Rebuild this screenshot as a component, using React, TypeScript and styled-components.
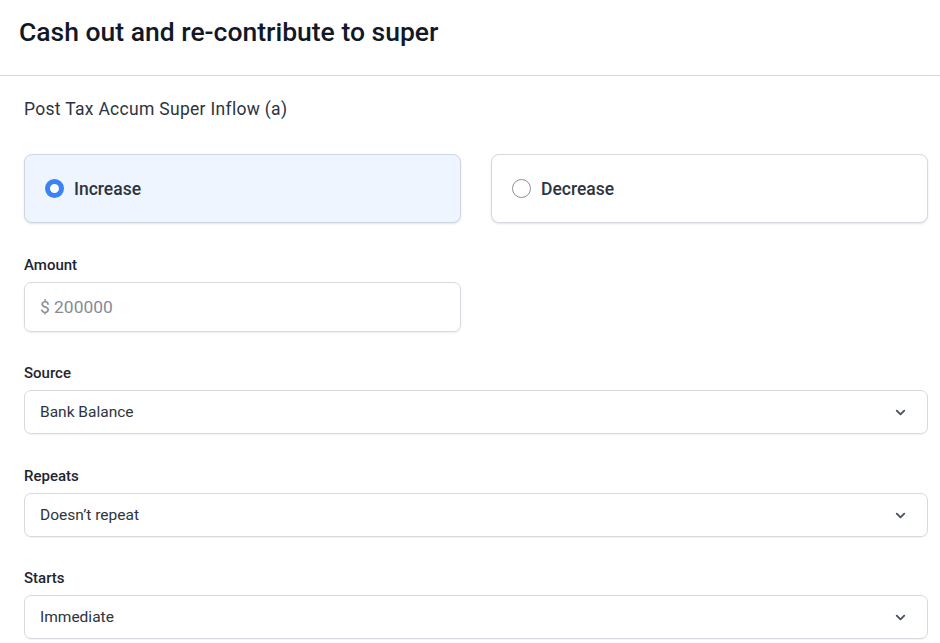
import React from "react";
import styled, { createGlobalStyle } from "styled-components";

const Global = createGlobalStyle`
  html, body { margin: 0; padding: 0; background: #ffffff; }
  body { font-family: Roboto, "Noto Sans", Arial, sans-serif; color: #1f2937; }
  * { box-sizing: border-box; }
`;

const Page = styled.div`
  width: 940px;
  height: 643px;
  overflow: hidden;
  background: #fff;
`;

const Header = styled.header`
  height: 76px;
  padding: 0 0 0 19px;
  display: flex;
  align-items: center;
  border-bottom: 1px solid #d9dbe1;
`;

const Title = styled.h1`
  margin: 0;
  font-size: 26.5px;
  font-weight: 500;
  color: #111827;
  letter-spacing: 0;
  transform: translateY(-6px);
`;

const Body = styled.div`
  padding: 21px 12px 0 24px;
  display: flex;
  flex-direction: column;
`;

const SectionTitle = styled.div`
  font-size: 17.5px;
  color: #2d3440;
  line-height: 24px;
  letter-spacing: 0.3px;
`;

const Options = styled.div`
  margin-top: 33px;
  display: grid;
  grid-template-columns: 1fr 1fr;
  gap: 30px;
`;

const OptionCard = styled.label<{ $active?: boolean }>`
  height: 69px;
  display: flex;
  align-items: center;
  gap: 10px;
  padding: 0 20px;
  border: 1px solid ${(p) => (p.$active ? "#cfd6e3" : "#d6d9e0")};
  border-radius: 8px;
  background: ${(p) => (p.$active ? "#eff5ff" : "#ffffff")};
  box-shadow: 0 1px 2px rgba(16, 24, 40, 0.12);
  font-size: 17.5px;
  font-weight: 500;
  color: #2d3440;
  cursor: pointer;
`;

const Radio = styled.span<{ $checked?: boolean }>`
  width: 19px;
  height: 19px;
  border-radius: 50%;
  flex: none;
  border: ${(p) => (p.$checked ? "5.5px solid #3b82f6" : "1.5px solid #8a909b")};
  background: #fff;
`;

const Field = styled.div<{ $top: number; $half?: boolean }>`
  margin-top: ${(p) => p.$top}px;
  display: flex;
  flex-direction: column;
  gap: 8px;
  width: ${(p) => (p.$half ? "437px" : "100%")};
`;

const Label = styled.div`
  font-size: 15px;
  font-weight: 500;
  color: #1f2530;
  line-height: 18px;
`;

const Input = styled.div`
  height: 50px;
  border: 1px solid #d6d9e0;
  border-radius: 7px;
  padding: 0 15px;
  display: flex;
  align-items: center;
  font-size: 17.4px;
  color: #868b94;
  box-shadow: 0 1px 2px rgba(16, 24, 40, 0.08);
`;

const Select = styled.div`
  height: 44px;
  border: 1px solid #d6d9e0;
  border-radius: 7px;
  padding: 0 19px 0 15px;
  display: flex;
  align-items: center;
  justify-content: space-between;
  font-size: 15.5px;
  color: #2d3440;
  box-shadow: 0 1px 1px rgba(16, 24, 40, 0.05);
`;

const Chevron = () => (
  <svg width="15" height="15" viewBox="0 0 24 24" fill="none" stroke="#4b5260" strokeWidth="3" strokeLinecap="round" strokeLinejoin="round">
    <path d="M6 9l6 6 6-6" />
  </svg>
);

const selects = [
  { label: "Source", value: "Bank Balance", top: 32 },
  { label: "Repeats", value: "Doesn’t repeat", top: 33 },
  { label: "Starts", value: "Immediate", top: 32 },
];

export default function App() {
  return (
    <Page>
      <Global />
      <Header>
        <Title>Cash out and re-contribute to super</Title>
      </Header>
      <Body>
        <SectionTitle>Post Tax Accum Super Inflow (a)</SectionTitle>
        <Options>
          <OptionCard $active>
            <Radio $checked />
            Increase
          </OptionCard>
          <OptionCard>
            <Radio />
            Decrease
          </OptionCard>
        </Options>
        <Field $top={33} $half>
          <Label>Amount</Label>
          <Input>$ 200000</Input>
        </Field>
        {selects.map((s) => (
          <Field key={s.label} $top={s.top}>
            <Label>{s.label}</Label>
            <Select>
              {s.value}
              <Chevron />
            </Select>
          </Field>
        ))}
      </Body>
    </Page>
  );
}
